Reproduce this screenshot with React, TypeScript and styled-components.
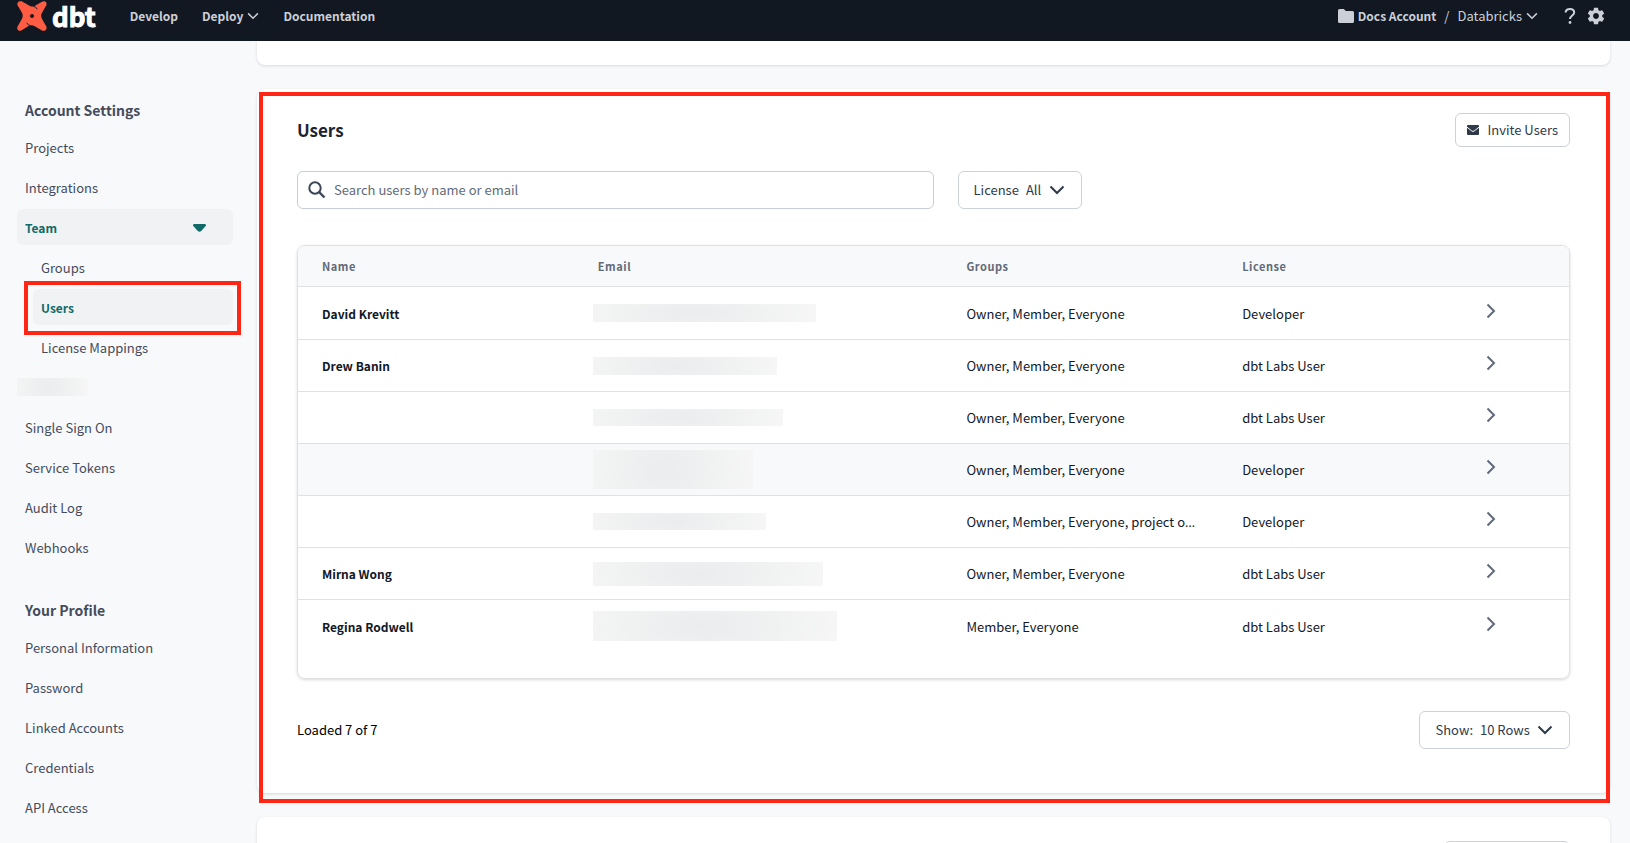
import React from "react";
import styled, { createGlobalStyle, css } from "styled-components";

const Global = createGlobalStyle`
  *, *::before, *::after { box-sizing: border-box; }
  html { height: 100%; overflow: hidden; }
  body {
    margin: 0;
    height: 100%;
    overflow: hidden;
    background: #f8f9fb;
    color: #111827;
    font-family: "Noto Sans CJK SC", "Noto Sans", sans-serif;
    font-size: 13px;
    line-height: 20px;
  }
  #root { height: 100%; }
  button, input, select { font: inherit; color: inherit; }
`;

const Page = styled.div`
  display: flex;
  flex-direction: column;
  height: 100%;
`;

const TopBar = styled.header`
  display: flex;
  align-items: flex-start;
  justify-content: space-between;
  flex: none;
  height: 41px;
  padding: 0 24px 0 16px;
  background: #121822;
  color: #cbd0d8;
`;

const BarGroup = styled.div<{ $gap: number }>`
  display: flex;
  align-items: center;
  gap: ${(p) => p.$gap}px;
  height: 32px;
`;

const NavLinks = styled(BarGroup)`
  height: 30px;
`;

const Brand = styled.a`
  display: flex;
  align-items: center;
  gap: 4px;
  margin-right: 10px;
  color: #fff;
  text-decoration: none;
`;

const Wordmark = styled.span`
  font-family: "Noto Sans CJK SC", sans-serif;
  font-size: 26px;
  font-weight: 700;
  line-height: 32px;
  -webkit-text-stroke: 1px #fff;
`;

const NavLink = styled.a`
  color: inherit;
  font-size: 12px;
  font-weight: 700;
  text-decoration: none;
`;

const BarButton = styled.button<{ $bold?: boolean }>`
  display: flex;
  align-items: center;
  gap: 4px;
  padding: 0;
  border: 0;
  background: none;
  font-size: ${(p) => (p.$bold ? 12 : 13)}px;
  font-weight: ${(p) => (p.$bold ? 700 : 400)};
`;

const AccountPath = styled.div`
  display: flex;
  align-items: center;
  gap: 8px;
  margin-right: 16px;
`;

const Body = styled.div`
  display: grid;
  grid-template-columns: 233px minmax(0, 1fr);
  column-gap: 24px;
  flex: 1;
  min-height: 0;
  padding-right: 20px;
`;

const Sidebar = styled.nav`
  display: flex;
  flex-direction: column;
  padding: 56px 0 0 17px;
`;

const SideHeading = styled.h2`
  margin: 0 0 6px;
  padding: 0 8px;
  color: #444c5b;
  font-size: 14px;
  font-weight: 700;
  line-height: 26px;
`;

const SideList = styled.ul`
  display: flex;
  flex-direction: column;
  gap: 4px;
  margin: 0 0 32px;
  padding: 0;
  list-style: none;
`;

const SubList = styled(SideList)`
  margin: 4px 0 0 16px;
`;

const SideItem = styled.li`
  position: relative;
`;

const SideLink = styled.a<{ $active?: boolean }>`
  display: flex;
  align-items: center;
  justify-content: space-between;
  height: 36px;
  padding: 1px 27px 0 8px;
  border-radius: 6px;
  color: #444c5b;
  text-decoration: none;
  ${(p) =>
    p.$active &&
    css`
      background: #f0f2f4;
      color: #0f6b69;
      font-size: 12px;
      font-weight: 700;
    `}
`;

const SideSlot = styled.li`
  display: flex;
  align-items: center;
  height: 36px;
`;

const Callout = styled.div<{ $inset: string }>`
  position: absolute;
  inset: ${(p) => p.$inset};
  border: 4px solid #ff2616;
  pointer-events: none;
`;

const Main = styled.main`
  display: flex;
  flex-direction: column;
  gap: 24px;
  min-width: 0;
`;

const Card = styled.section<{ $kind?: "top" | "bottom" }>`
  position: relative;
  flex: none;
  padding: 24px 40px 44px;
  border-radius: 8px;
  background: #fff;
  box-shadow: 0 1px 3px rgba(17, 24, 39, 0.14);
  ${(p) =>
    p.$kind === "top" &&
    css`
      height: 24px;
      padding: 0;
      border-radius: 0 0 8px 8px;
    `}
  ${(p) =>
    p.$kind === "bottom" &&
    css`
      display: flex;
      justify-content: flex-end;
      padding-bottom: 24px;
    `}
`;

const CardHead = styled.div`
  display: flex;
  align-items: center;
  justify-content: space-between;
`;

const Title = styled.h1`
  margin: 0;
  color: #1b2431;
  font-size: 17px;
  font-weight: 700;
  line-height: 28px;
`;

const OutlineButton = styled.button<{ $wide?: boolean }>`
  display: flex;
  align-items: center;
  gap: 8px;
  height: 34px;
  min-width: ${(p) => (p.$wide ? 126 : 114)}px;
  padding: 0 11px;
  border: 1px solid #cdd1d8;
  border-radius: 6px;
  background: #fff;
  color: #2f3a49;
`;

const Filters = styled.div`
  display: flex;
  gap: 24px;
  margin: 24px 0 36px;
`;

const SearchBox = styled.label`
  display: flex;
  align-items: center;
  gap: 8px;
  width: 50%;
  height: 38px;
  padding: 0 10px;
  border: 1px solid #c8ccd5;
  border-radius: 6px;
`;

const SearchInput = styled.input`
  flex: 1;
  min-width: 0;
  padding: 0;
  border: 0;
  outline: 0;
  background: none;
  &::placeholder { color: #616a79; opacity: 1; }
`;

const SelectBox = styled.label`
  display: flex;
  align-items: center;
  gap: 7px;
  height: 38px;
  padding: 0 16px 0 15px;
  border: 1px solid #cdd1d8;
  border-radius: 6px;
  background: #fff;
  color: #2f3a49;
`;

const Select = styled.select`
  appearance: none;
  padding: 0;
  border: 0;
  outline: 0;
  background: none;
`;

const TableFrame = styled.div`
  padding-bottom: 26px;
  overflow: hidden;
  border: 1px solid #dfe1e5;
  border-radius: 8px;
  box-shadow: 0 1px 3px rgba(17, 24, 39, 0.16);
`;

const Table = styled.table`
  width: 100%;
  border-collapse: separate;
  border-spacing: 0;
  table-layout: fixed;
`;

const Col = styled.col<{ $w: string }>`
  width: ${(p) => p.$w};
`;

const HeadCell = styled.th`
  height: 41px;
  padding: 0 24px;
  border-bottom: 1px solid #dfe1e5;
  background: #f8f9fb;
  color: #616a79;
  font-size: 11px;
  font-weight: 700;
  letter-spacing: 0.05em;
  text-align: left;
`;

const Cell = styled.td<{ $bold?: boolean }>`
  height: 52px;
  padding: 1px 16px 0 24px;
  border-bottom: 1px solid #dfe1e5;
  overflow: hidden;
  font-size: ${(p) => (p.$bold ? 12 : 13)}px;
  font-weight: ${(p) => (p.$bold ? 700 : 400)};
  white-space: nowrap;
`;

const Row = styled.tr<{ $hover?: boolean }>`
  background: ${(p) => (p.$hover ? "#f8f9fb" : "#fff")};
  &:first-child td { height: 53px; }
  &:last-child td { border-bottom: 0; }
`;

const EmailCell = styled(Cell)`
  padding: 0 0 0 19px;
`;

/* The CJK family centres its ellipsis; this one keeps it on the baseline. */
const Ellipsis = styled.span`
  font-family: "Open Sans", sans-serif;
`;

const RowButton = styled.button`
  display: flex;
  padding: 0 0 6px 1px;
  border: 0;
  background: none;
  color: #616a79;
`;

const Redacted = styled.div<{ $w: number; $h: number }>`
  width: ${(p) => p.$w}px;
  height: ${(p) => p.$h}px;
  background: radial-gradient(ellipse 60% 200% at 45% 50%, #ebecee, #f0f1f1 50%, #f7f7f8);
`;

const Footer = styled.div`
  display: flex;
  align-items: center;
  justify-content: space-between;
  margin-top: 32px;
  color: #000;
`;

const Chevron = ({ size = 16, stroke = 2 }: { size?: number; stroke?: number }) => (
  <svg width={size} height={size} viewBox="0 0 16 16" fill="none" stroke="currentColor" strokeWidth={stroke} aria-hidden>
    <path d="M1.500 4.500 8 11l6.500-6.500" />
  </svg>
);

const Logo = () => (
  <svg width="32" height="32" viewBox="0 0 32 32" aria-hidden>
    <path
      fill="#ff5c43"
      d="M6.500 1.700 14 5.900q2.300 1.300 4.600.2L26 1.700c3-1.700 5.700 1 4.200 3.800L26.300 12.300c-1.500 2.500-1.500 4.700 0 7.200l3.900 6.700c1.500 3-1.400 5.700-4.200 4.200l-7.200-4.200c-2.300-1.300-4.400-1.300-6.700 0L5.700 30.300c-3 1.700-5.500-1-4-4l4-7c1.400-2.400 1.400-4.600 0-7L1.700 5.600C.3 2.800 3.200.2 6.500 1.700Z"
    />
    <path d="M17.500 6.200q2.300.5 3.800 3M14.500 25.800q-2.300-.5-3.800-3" fill="none" stroke="#121822" strokeWidth="1" />
    <circle cx="16" cy="16" r="2" fill="#121822" />
  </svg>
);

const FolderIcon = () => (
  <svg width="16" height="14" viewBox="0 0 16 14" fill="currentColor" aria-hidden>
    <path d="M1.500 0h4.300l2 2h6.700A1.500 1.500 0 0 1 16 3.500v9a1.500 1.500 0 0 1-1.500 1.500h-13A1.500 1.500 0 0 1 0 12.500v-11A1.500 1.500 0 0 1 1.500 0Z" />
  </svg>
);

const HelpIcon = () => (
  <svg width="12" height="16" viewBox="0 0 12 16" fill="none" stroke="currentColor" strokeWidth="2" aria-hidden>
    <path d="M1.500 4.500C1.800 2.200 3.500 1 6 1c2.600 0 4.200 1.300 4.200 3.500C10.200 7.500 6 7.500 6 11" />
    <circle cx="6" cy="14.500" r="1.400" fill="currentColor" stroke="none" />
  </svg>
);

const GearIcon = () => (
  <svg width="20" height="20" viewBox="0 0 24 24" fill="currentColor" aria-hidden>
    <path d="M19.430 12.980c.04-.32.07-.64.07-.98s-.03-.66-.07-.98l2.110-1.650c.19-.15.24-.42.12-.64l-2-3.460c-.12-.22-.39-.3-.61-.22l-2.490 1c-.52-.4-1.080-.73-1.690-.98l-.38-2.650A.488.488 0 0 0 14 2h-4c-.25 0-.46.18-.49.42l-.38 2.650c-.61.25-1.170.59-1.690.98l-2.490-1c-.23-.09-.49 0-.61.22l-2 3.460c-.13.22-.07.49.12.64l2.110 1.650c-.04.32-.07.65-.07.98s.03.66.07.98l-2.110 1.650c-.19.15-.24.42-.12.64l2 3.460c.12.22.39.3.61.22l2.490-1c.52.4 1.080.73 1.690.98l.38 2.650c.03.24.24.42.49.42h4c.25 0 .46-.18.49-.42l.38-2.650c.61-.25 1.170-.59 1.690-.98l2.490 1c.23.09.49 0 .61-.22l2-3.460c.12-.22.07-.49-.12-.64l-2.110-1.650ZM12 15.500c-1.930 0-3.500-1.570-3.500-3.500s1.570-3.500 3.500-3.500 3.500 1.570 3.500 3.500-1.570 3.500-3.500 3.500Z" />
  </svg>
);

const CaretIcon = () => (
  <svg width="13" height="8" viewBox="0 0 13 8" fill="currentColor" aria-hidden>
    <path d="M1 0h11q1.300.3.900 1.700L8.200 7q-1.700 1.600-3.400 0L.1 1.700Q-.3.300 1 0Z" />
  </svg>
);

const MailIcon = () => (
  <svg width="12" height="10" viewBox="0 0 12 10" aria-hidden>
    <rect width="12" height="10" rx="1" fill="currentColor" />
    <path d="M0 2.200 4.800 6q1.200.9 2.400 0L12 2.200" fill="none" stroke="#fff" />
  </svg>
);

const SearchIcon = () => (
  <svg width="18" height="18" viewBox="0 0 18 18" fill="none" stroke="#3c4655" strokeWidth="2" aria-hidden>
    <circle cx="7" cy="7" r="5.700" />
    <path d="m11 11 5.500 5.500" strokeWidth="2.400" />
  </svg>
);

const RowChevron = () => (
  <svg width="10" height="16" viewBox="0 0 10 16" fill="none" stroke="currentColor" strokeWidth="2" aria-hidden>
    <path d="m1.500 1.500 6.500 6.500-6.500 6.500" />
  </svg>
);

const users = [
  { name: "David Krevitt", w: 223, h: 18, groups: "Owner, Member, Everyone", license: "Developer" },
  { name: "Drew Banin", w: 184, h: 18, groups: "Owner, Member, Everyone", license: "dbt Labs User" },
  { name: "", w: 190, h: 17, groups: "Owner, Member, Everyone", license: "dbt Labs User" },
  { name: "", w: 160, h: 39, groups: "Owner, Member, Everyone", license: "Developer", hover: true },
  { name: "", w: 173, h: 17, groups: "Owner, Member, Everyone, project o", more: true, license: "Developer" },
  { name: "Mirna Wong", w: 230, h: 24, groups: "Owner, Member, Everyone", license: "dbt Labs User" },
  { name: "Regina Rodwell", w: 244, h: 30, groups: "Member, Everyone", license: "dbt Labs User" },
];

const SideEntry = ({ text }: { text: string }) => (
  <SideItem>
    <SideLink href="#">{text}</SideLink>
  </SideItem>
);

export default function App() {
  return (
    <Page>
      <Global />
      <TopBar>
        <BarGroup $gap={24}>
          <Brand href="#">
            <Logo />
            <Wordmark>dbt</Wordmark>
          </Brand>
          <NavLinks as="nav" $gap={24}>
            <NavLink href="#">Develop</NavLink>
            <BarButton $bold>
              Deploy <Chevron size={12} />
            </BarButton>
            <NavLink href="#">Documentation</NavLink>
          </NavLinks>
        </BarGroup>
        <BarGroup $gap={10}>
          <AccountPath>
            <BarButton $bold>
              <FolderIcon /> Docs Account
            </BarButton>
            <span>/</span>
            <BarButton>
              Databricks <Chevron size={12} />
            </BarButton>
          </AccountPath>
          <BarButton aria-label="Help">
            <HelpIcon />
          </BarButton>
          <BarButton aria-label="Settings">
            <GearIcon />
          </BarButton>
        </BarGroup>
      </TopBar>
      <Body>
        <Sidebar>
          <SideHeading>Account Settings</SideHeading>
          <SideList>
            <SideEntry text="Projects" />
            <SideEntry text="Integrations" />
            <SideItem>
              <SideLink href="#" $active>
                Team <CaretIcon />
              </SideLink>
              <SubList>
                <SideEntry text="Groups" />
                <SideItem>
                  <SideLink href="#" $active>
                    Users
                  </SideLink>
                  <Callout $inset="-8px -8px -10px -9px" />
                </SideItem>
                <SideEntry text="License Mappings" />
              </SubList>
            </SideItem>
            <SideSlot>
              <Redacted $w={71} $h={18} />
            </SideSlot>
            <SideEntry text="Single Sign On" />
            <SideEntry text="Service Tokens" />
            <SideEntry text="Audit Log" />
            <SideEntry text="Webhooks" />
          </SideList>
          <SideHeading>Your Profile</SideHeading>
          <SideList>
            <SideEntry text="Personal Information" />
            <SideEntry text="Password" />
            <SideEntry text="Linked Accounts" />
            <SideEntry text="Credentials" />
            <SideEntry text="API Access" />
          </SideList>
        </Sidebar>
        <Main>
          <Card $kind="top" />
          <Card>
            <CardHead>
              <Title>Users</Title>
              <OutlineButton>
                <MailIcon /> Invite Users
              </OutlineButton>
            </CardHead>
            <Filters>
              <SearchBox>
                <SearchIcon />
                <SearchInput type="text" aria-label="Search users" placeholder="Search users by name or email" />
              </SearchBox>
              <SelectBox>
                License
                <Select>
                  <option>All</option>
                </Select>
                <Chevron />
              </SelectBox>
            </Filters>
            <TableFrame>
              <Table>
                <colgroup>
                  <Col $w="21.7%" />
                  <Col $w="29%" />
                  <Col $w="21.7%" />
                  <Col $w="19.1%" />
                  <Col $w="8.5%" />
                </colgroup>
                <thead>
                  <tr>
                    <HeadCell>Name</HeadCell>
                    <HeadCell>Email</HeadCell>
                    <HeadCell>Groups</HeadCell>
                    <HeadCell>License</HeadCell>
                    <HeadCell aria-label="Open" />
                  </tr>
                </thead>
                <tbody>
                  {users.map((u, i) => (
                    <Row key={i} $hover={u.hover}>
                      <Cell $bold>{u.name}</Cell>
                      <EmailCell>
                        <Redacted $w={u.w} $h={u.h} />
                      </EmailCell>
                      <Cell>
                        {u.groups}
                        {u.more && <Ellipsis>…</Ellipsis>}
                      </Cell>
                      <Cell>{u.license}</Cell>
                      <Cell>
                        <RowButton aria-label="Open user">
                          <RowChevron />
                        </RowButton>
                      </Cell>
                    </Row>
                  ))}
                </tbody>
              </Table>
            </TableFrame>
            <Footer>
              <span>Loaded 7 of 7</span>
              <SelectBox>
                Show:
                <Select>
                  <option>10 Rows</option>
                </Select>
                <Chevron />
              </SelectBox>
            </Footer>
            <Callout $inset="3px 0 -10px 2px" />
          </Card>
          <Card $kind="bottom">
            <OutlineButton $wide aria-label="Edit" />
          </Card>
        </Main>
      </Body>
    </Page>
  );
}
